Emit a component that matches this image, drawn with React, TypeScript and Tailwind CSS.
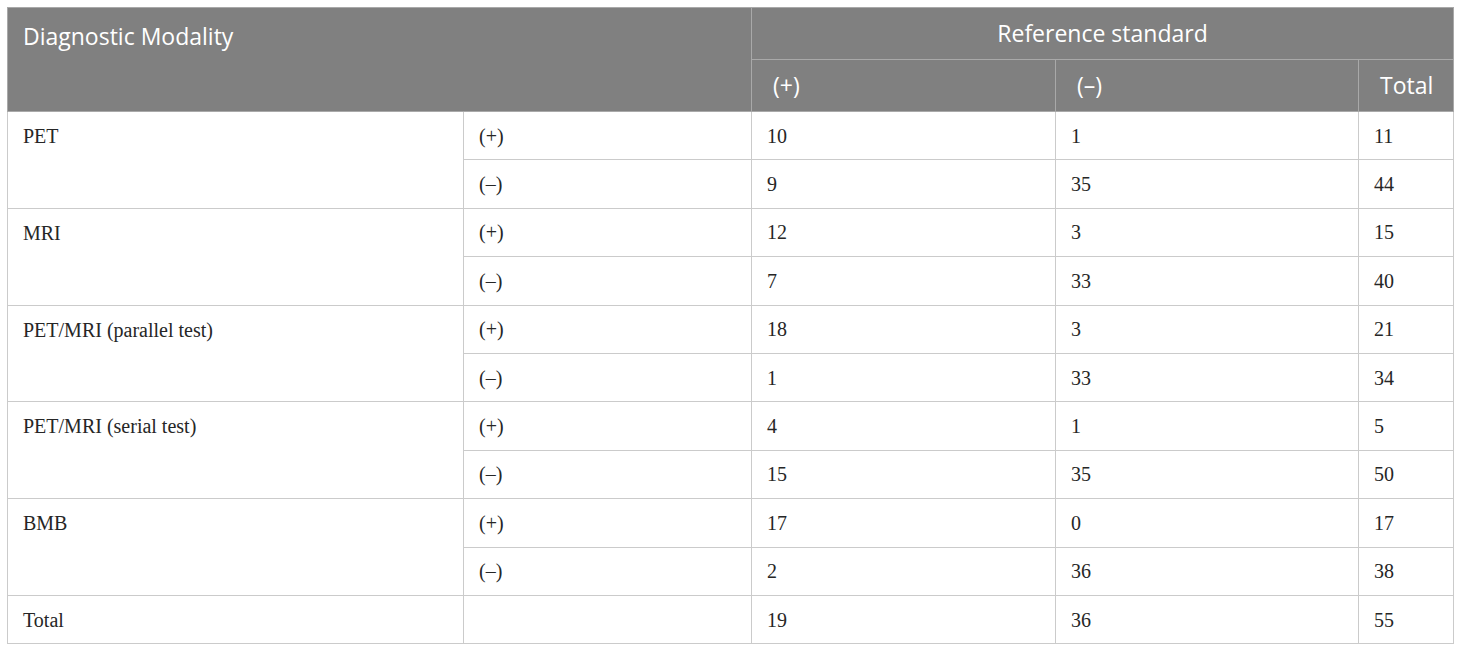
const groups: { name: string; rows: [string, string, string, string][] }[] = [
  { name: "PET", rows: [["(+)", "10", "1", "11"], ["(–)", "9", "35", "44"]] },
  { name: "MRI", rows: [["(+)", "12", "3", "15"], ["(–)", "7", "33", "40"]] },
  { name: "PET/MRI (parallel test)", rows: [["(+)", "18", "3", "21"], ["(–)", "1", "33", "34"]] },
  { name: "PET/MRI (serial test)", rows: [["(+)", "4", "1", "5"], ["(–)", "15", "35", "50"]] },
  { name: "BMB", rows: [["(+)", "17", "0", "17"], ["(–)", "2", "36", "38"]] },
];

const td = "h-[48.4px] border border-[#cbcbcb] pl-[15px] align-middle";
const th = "border border-[#a9a9a9] font-normal align-middle";

export default function App() {
  return (
    <div className="bg-white p-[7px]">
      <table
        className="w-[1446px] table-fixed border-collapse text-[20px] text-[#262626]"
        style={{ fontFamily: '"Liberation Serif", serif' }}
      >
        <colgroup>
          <col className="w-[456px]" />
          <col className="w-[288px]" />
          <col className="w-[304px]" />
          <col className="w-[303px]" />
          <col className="w-[95px]" />
        </colgroup>
        <thead className="bg-[#808080] text-[23px] text-white" style={{ fontFamily: '"Open Sans", sans-serif' }}>
          <tr className="h-[52px]">
            <th colSpan={2} rowSpan={2} className={`${th} text-left pl-[15px] align-top leading-[56px]`}>
              Diagnostic Modality
            </th>
            <th colSpan={3} className={`${th} text-center`}>
              Reference standard
            </th>
          </tr>
          <tr className="h-[52px]">
            <th className={`${th} text-left pl-[21px]`}>(+)</th>
            <th className={`${th} text-left pl-[21px]`}>(–)</th>
            <th className={`${th} text-left pl-[21px]`}>Total</th>
          </tr>
        </thead>
        <tbody>
          {groups.map((g) =>
            g.rows.map((r, i) => (
              <tr key={g.name + i}>
                {i === 0 && (
                  <td rowSpan={2} className={`${td} align-top leading-[48px]`}>
                    {g.name}
                  </td>
                )}
                {r.map((c, j) => (
                  <td key={j} className={td}>
                    {c}
                  </td>
                ))}
              </tr>
            ))
          )}
          <tr>
            <td className={td}>Total</td>
            <td className={td}></td>
            <td className={td}>19</td>
            <td className={td}>36</td>
            <td className={td}>55</td>
          </tr>
        </tbody>
      </table>
    </div>
  );
}
